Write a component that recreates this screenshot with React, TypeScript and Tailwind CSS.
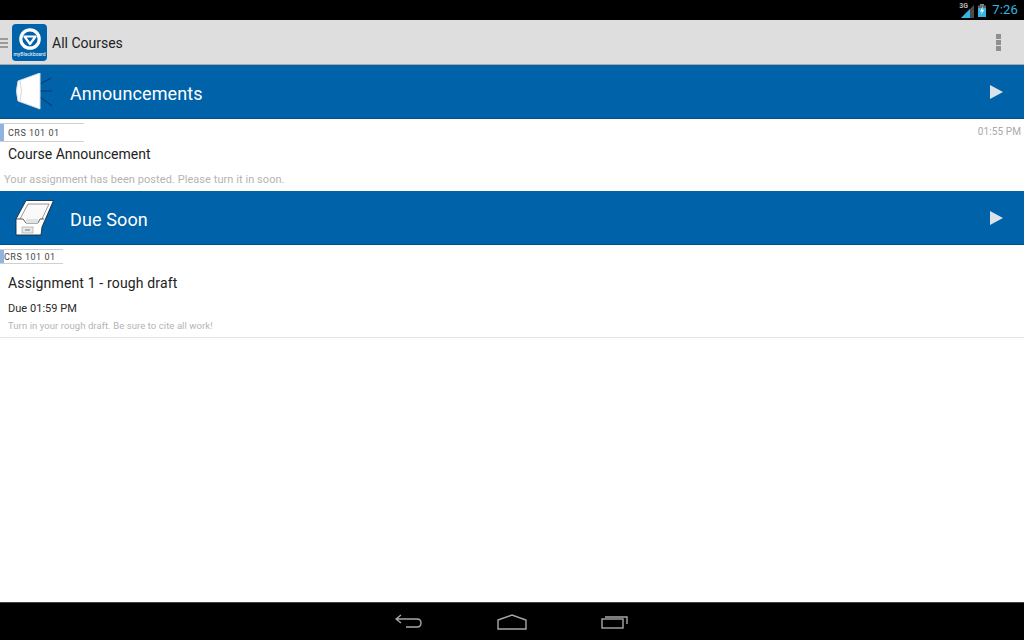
function StatusBar() {
  return (
    <div className="h-5 shrink-0 bg-black flex items-center justify-end pr-[6px]">
      <div className="relative w-[15px] h-[15px] mr-[4px]">
        <span className="absolute left-0 top-0 text-[7px] leading-[7px] font-bold text-[#b8b8b8]">3G</span>
        <svg className="absolute inset-0" viewBox="0 0 15 15" width="15" height="15">
          <path d="M2 15L15 2V15Z" fill="#4a4a4a" />
          <path d="M2 15L11 6V15Z" fill="#33b5e5" />
        </svg>
      </div>
      <svg className="mr-[6px]" viewBox="0 0 8 13" width="8" height="13">
        <rect x="2" y="0" width="4" height="2" fill="#888" />
        <rect x="0" y="1.5" width="8" height="3" fill="#666" />
        <rect x="0" y="4" width="8" height="9" fill="#33b5e5" />
        <path d="M5 2L2 7.5H4L3 11L6.2 5.8H4.2Z" fill="#fff" />
      </svg>
      <span className="text-[13px] leading-5 text-[#33b5e5] font-['Roboto',sans-serif] tracking-[0.2px]">7:26</span>
    </div>
  );
}

function ActionBar() {
  return (
    <div className="h-[45px] shrink-0 bg-[#dedede] border-b border-b-[#a8a8a8] flex items-center relative">
      <div className="w-[8px] flex flex-col gap-[2px] mr-[4px] mt-[1px]">
        <div className="h-[2px] bg-[#9a9a9a]" />
        <div className="h-[2px] bg-[#9a9a9a]" />
        <div className="h-[2px] bg-[#9a9a9a]" />
      </div>
      <div className="w-[35px] h-[37px] rounded-[4px] bg-[#0062a8] flex flex-col items-center pt-[3px] mt-[1px]">
        <svg viewBox="0 0 24 24" width="24" height="24">
          <circle cx="12" cy="12" r="9.2" fill="none" stroke="#fff" strokeWidth="3.2" />
          <path d="M6.5 9.5H17.5L12 17Z" fill="none" stroke="#fff" strokeWidth="2.2" strokeLinejoin="round" />
        </svg>
        <span className="text-[5px] leading-[7px] font-medium text-[#dfeaf3] whitespace-nowrap">myBlackboard</span>
      </div>
      <span className="ml-[5px] mt-[2px] text-[14px] text-[#222]">All Courses</span>
      <div className="ml-auto mr-[23px] flex flex-col gap-[1px]">
        <div className="size-[5px] bg-[#8f8f8f]" />
        <div className="size-[5px] bg-[#8f8f8f]" />
        <div className="size-[5px] bg-[#8f8f8f]" />
      </div>
    </div>
  );
}

function Arrow() {
  return (
    <svg className="ml-auto mr-[21px]" viewBox="0 0 13 14" width="13" height="14">
      <path d="M0 0L13 7L0 14Z" fill="#dbe3ea" />
    </svg>
  );
}

function SectionHeader({ title, icon }: { title: string; icon: React.ReactNode }) {
  return (
    <div className="h-[54px] shrink-0 bg-[#0062a8] border-b border-b-[#00508c] flex items-center">
      <div className="w-[70px] shrink-0 flex pl-[15px]">{icon}</div>
      <span className="text-[18px] leading-6 mt-[4px] text-white tracking-[0.12px]">{title}</span>
      <Arrow />
    </div>
  );
}

function Megaphone() {
  return (
    <svg viewBox="0 0 40 38" width="40" height="38">
      <path d="M25 11L36 5M25 18H37M25 24L37 33" stroke="#0a3560" strokeWidth="1" fill="none" />
      <path d="M3 8L25 0V36L3 28Q0 18 3 8Z" fill="#fff" stroke="#d5dbe2" strokeWidth="1" />
      <path d="M5 8Q8 18 5 28" fill="none" stroke="#d0d5dc" strokeWidth="1" />
    </svg>
  );
}

function Drawer() {
  return (
    <svg viewBox="0 0 40 38" width="40" height="38">
      <path d="M1 20L11 1.5H38.5L27 28L26 36H1Z" fill="#fff" stroke="#1a2a3a" strokeWidth="0.9" strokeLinejoin="round" />
      <path d="M5 20L13 5H34L27 20" fill="#fafafa" stroke="#555" strokeWidth="0.6" />
      <path d="M1 20H8L11 24H23L25 20H29" fill="none" stroke="#333" strokeWidth="0.8" />
      <path d="M11 24V20H23V24" fill="#e2e2e2" />
      <rect x="7" y="28" width="11" height="6" fill="#e8e8e8" stroke="#999" strokeWidth="0.6" />
      <path d="M10 31H15" stroke="#777" strokeWidth="1" />
    </svg>
  );
}

function CourseTag({ height, width, pad }: { height: string; width: string; pad: string }) {
  return (
    <div className={`${height} ${width} border-y border-y-[#d0d0d0] flex items-center`}>
      <div className="w-[4px] h-full bg-[#8fb4e0]" />
      <span className={`${pad} text-[9px] leading-3 tracking-[0.5px] text-[#444]`}>CRS 101 01</span>
    </div>
  );
}

function BackIcon() {
  return (
    <svg className="mt-[-2px]" viewBox="0 0 28 14" width="28" height="14" fill="none" stroke="#a8a8a8" strokeWidth="1.4">
      <path d="M6 1L1 5L6 9M1 5H22Q26 5 26 9T22 13H11" />
    </svg>
  );
}

function HomeIcon() {
  return (
    <svg viewBox="0 0 30 16" width="30" height="16" fill="none" stroke="#a8a8a8" strokeWidth="1.4">
      <path d="M1 6L15 1L29 6V15H1Z" />
    </svg>
  );
}

function RecentIcon() {
  return (
    <svg viewBox="0 0 28 14" width="28" height="14" fill="none" stroke="#a8a8a8" strokeWidth="1.4">
      <rect x="1" y="4" width="21" height="9" />
      <path d="M4 2H26V9" />
    </svg>
  );
}

export default function App() {
  return (
    <div className="w-[1024px] h-[640px] flex flex-col bg-white overflow-hidden font-['Roboto',sans-serif]">
      <StatusBar />
      <ActionBar />
      <SectionHeader title="Announcements" icon={<Megaphone />} />
      <div className="h-[72px] shrink-0 pt-[4px] relative">
        <CourseTag height="h-[19px]" width="w-[84px]" pad="pl-[4px]" />
        <span className="absolute right-[3px] top-[7px] text-[10px] leading-3 tracking-[0.1px] text-[#a9a9a9]">01:55 PM</span>
        <div className="pl-2 mt-[2px] text-[14px] leading-5 text-[#222]">Course Announcement</div>
        <div className="pl-1 mt-[9px] text-[11px] leading-[14px] tracking-[0.06px] text-[#b4b4b4]">Your assignment has been posted. Please turn it in soon.</div>
      </div>
      <SectionHeader title="Due Soon" icon={<Drawer />} />
      <div className="h-[93px] shrink-0 pt-[4px] border-b border-b-[#e4e4e4]">
        <CourseTag height="h-[15px]" width="w-[63px]" pad="pl-0" />
        <div className="pl-2 mt-[9px] text-[14px] leading-5 tracking-[0.15px] text-[#222]">Assignment 1 - rough draft</div>
        <div className="pl-2 mt-[8px] text-[11px] leading-4 tracking-[0.03px] text-[#2a2a2a]">Due 01:59 PM</div>
        <div className="pl-2 mt-[1px] text-[9.5px] leading-[16px] tracking-[0.07px] text-[#b4b4b4]">Turn in your rough draft. Be sure to cite all work!</div>
      </div>
      <div className="flex-1" />
      <div className="h-[38px] shrink-0 bg-black border-t border-t-[#444] flex items-center justify-center gap-[74px]">
        <BackIcon />
        <HomeIcon />
        <RecentIcon />
      </div>
    </div>
  );
}
